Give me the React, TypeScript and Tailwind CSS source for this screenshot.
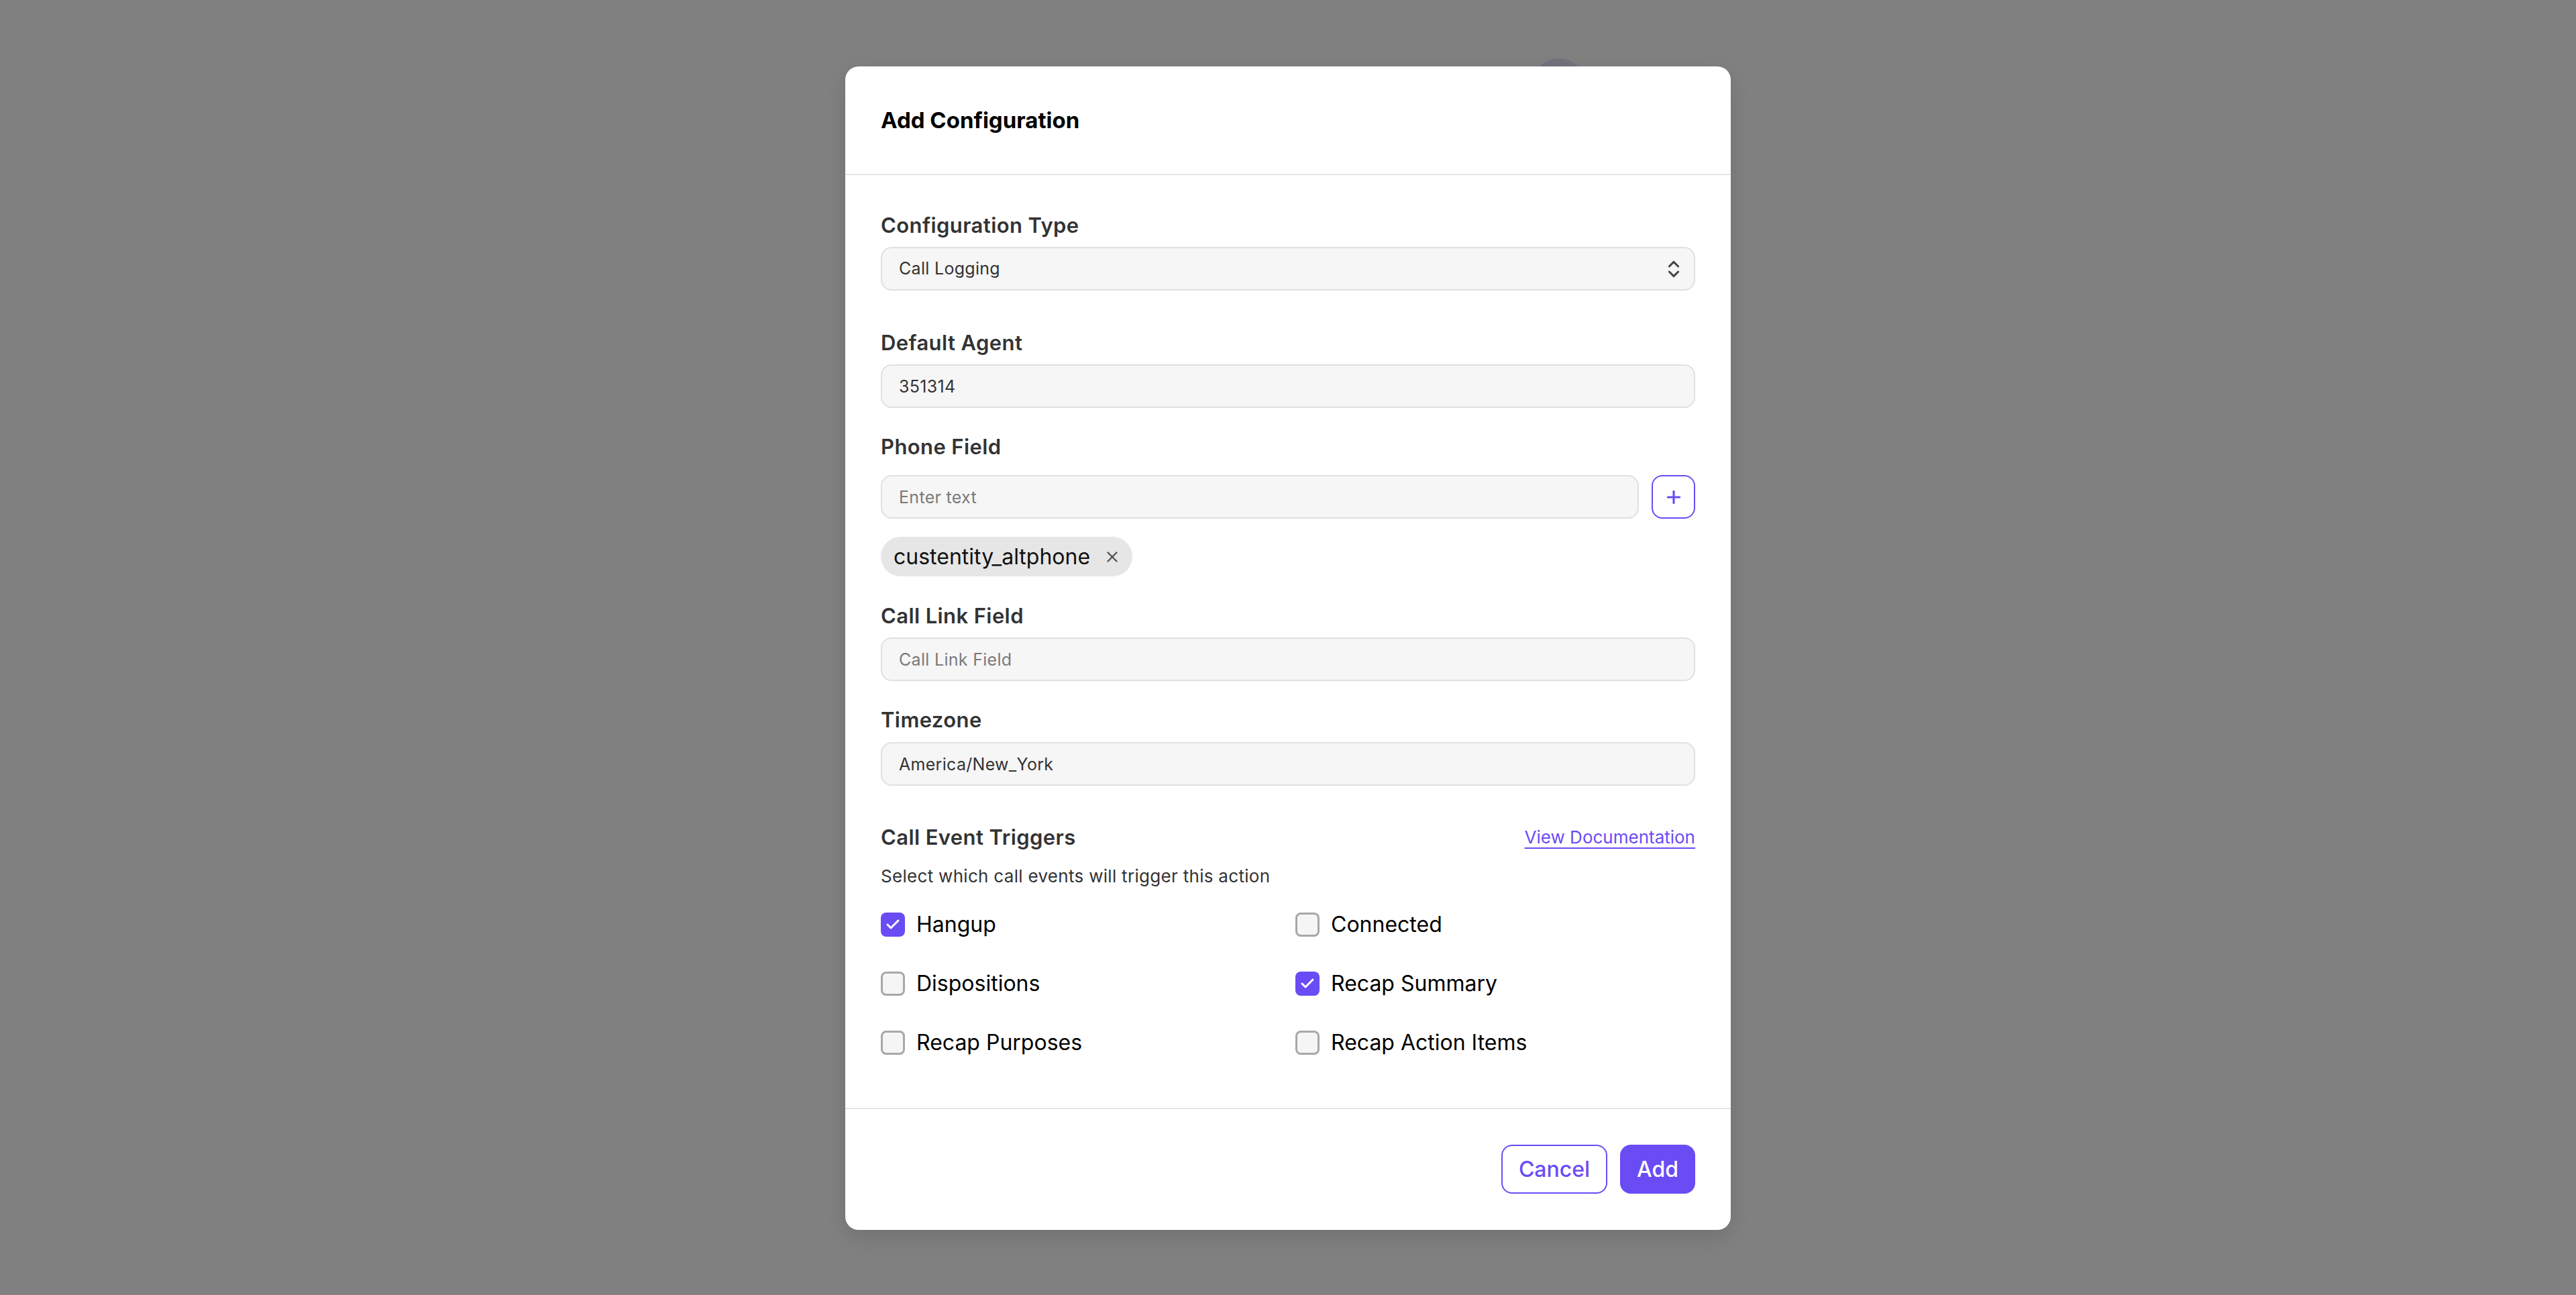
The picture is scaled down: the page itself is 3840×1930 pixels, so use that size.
import { ChevronsUpDown, Plus, X, Check } from "lucide-react";

const triggers = [
  { label: "Hangup", checked: true },
  { label: "Connected", checked: false },
  { label: "Dispositions", checked: false },
  { label: "Recap Summary", checked: true },
  { label: "Recap Purposes", checked: false },
  { label: "Recap Action Items", checked: false },
];

function Label({ children }: { children: React.ReactNode }) {
  return (
    <div className="text-[31px] leading-[36px] font-semibold tracking-[0.4px] text-[#333333]">{children}</div>
  );
}

function TextInput({ value, placeholder }: { value?: string; placeholder?: string }) {
  return (
    <input
      type="text"
      defaultValue={value}
      placeholder={placeholder}
      className="w-full h-[65px] bg-[#f6f6f6] border-2 border-[#e0e0e0] rounded-[16px] pl-[25px] pr-4 text-[25px] tracking-[0.3px] text-[#333333] placeholder:text-[#7a7a7a] outline-none"
    />
  );
}

export default function App() {
  return (
    <div
      className="relative min-h-screen w-full bg-[#808080] flex justify-center pt-[99px] pb-[97px]"
      style={{ fontFamily: "Inter, 'Noto Sans', sans-serif" }}
    >
      {/* something on the page behind the overlay */}
      <div className="absolute left-[2284px] top-[87px] w-[80px] h-[80px] rounded-full bg-[#75727d]" />

      <div className="relative w-[1320px] bg-white rounded-[20px] shadow-[0_10px_30px_rgba(0,0,0,0.12)] flex flex-col">
        {/* Header */}
        <div className="h-[162px] px-[53px] flex items-center border-b-2 border-[#e6e6e6]">
          <h2 className="text-[33px] leading-[40px] font-bold text-black">Add Configuration</h2>
        </div>

        {/* Body */}
        <div className="px-[53px] pt-[57px] pb-[73px] flex flex-col">
          <Label>Configuration Type</Label>
          <div className="mt-[14px] h-[65px] bg-[#f6f6f6] border-2 border-[#e0e0e0] rounded-[16px] pl-[25px] pr-[14px] flex items-center justify-between">
            <span className="text-[25px] tracking-[0.3px] text-[#333333]">Call Logging</span>
            <ChevronsUpDown size={32} strokeWidth={2.25} className="text-[#444444]" />
          </div>

          <div className="mt-[60px]">
            <Label>Default Agent</Label>
          </div>
          <div className="mt-[14px]">
            <TextInput value="351314" />
          </div>

          <div className="mt-[40px]">
            <Label>Phone Field</Label>
          </div>
          <div className="mt-[24px] flex items-center gap-[19px]">
            <div className="flex-1">
              <TextInput placeholder="Enter text" />
            </div>
            <button className="w-[65px] h-[65px] shrink-0 border-2 border-[#6a4cf5] rounded-[16px] flex items-center justify-center text-[#6a4cf5]">
              <Plus size={30} strokeWidth={2.5} />
            </button>
          </div>
          <div className="mt-[27px] flex">
            <div className="h-[59px] rounded-full bg-[#e6e6e6] pl-[19px] pr-[17px] flex items-center gap-[20px]">
              <span className="text-[32px] text-[#111111]">custentity_altphone</span>
              <X size={26} strokeWidth={2.25} className="text-[#555555]" />
            </div>
          </div>

          <div className="mt-[41px]">
            <Label>Call Link Field</Label>
          </div>
          <div className="mt-[14px]">
            <TextInput placeholder="Call Link Field" />
          </div>

          <div className="mt-[40px]">
            <Label>Timezone</Label>
          </div>
          <div className="mt-[15px]">
            <TextInput value="America/New_York" />
          </div>

          <div className="mt-[59px] flex items-center justify-between">
            <Label>Call Event Triggers</Label>
            <a href="#" className="text-[26px] leading-[32px] text-[#6a4cf5] underline underline-offset-[6px] decoration-2">
              View Documentation
            </a>
          </div>
          <p className="mt-[24px] text-[26px] leading-[32px] tracking-[0.3px] text-[#333333]">
            Select which call events will trigger this action
          </p>

          <div className="mt-[32px] grid grid-cols-2 gap-x-[22px] gap-y-[40px]">
            {triggers.map((t) => (
              <label key={t.label} className="h-[48px] flex items-center gap-[17px]">
                {t.checked ? (
                  <span className="w-[36px] h-[36px] rounded-[8px] bg-[#6a4cf5] flex items-center justify-center">
                    <Check size={24} strokeWidth={3} className="text-white" />
                  </span>
                ) : (
                  <span className="w-[36px] h-[36px] rounded-[8px] border-[3px] border-[#a8a8a8] bg-[#f5f5f5]" />
                )}
                <span className="text-[32px] leading-[48px] text-black">{t.label}</span>
              </label>
            ))}
          </div>
        </div>

        {/* Footer */}
        <div className="border-t-2 border-[#e6e6e6] p-[53px] flex justify-end gap-[19px]">
          <button className="w-[158px] h-[73px] border-2 border-[#6a4cf5] rounded-[16px] text-[32px] font-medium text-[#6a4cf5] bg-white">
            Cancel
          </button>
          <button className="w-[112px] h-[73px] rounded-[16px] text-[32px] font-medium text-white bg-[#6a4cf5]">
            Add
          </button>
        </div>
      </div>
    </div>
  );
}
